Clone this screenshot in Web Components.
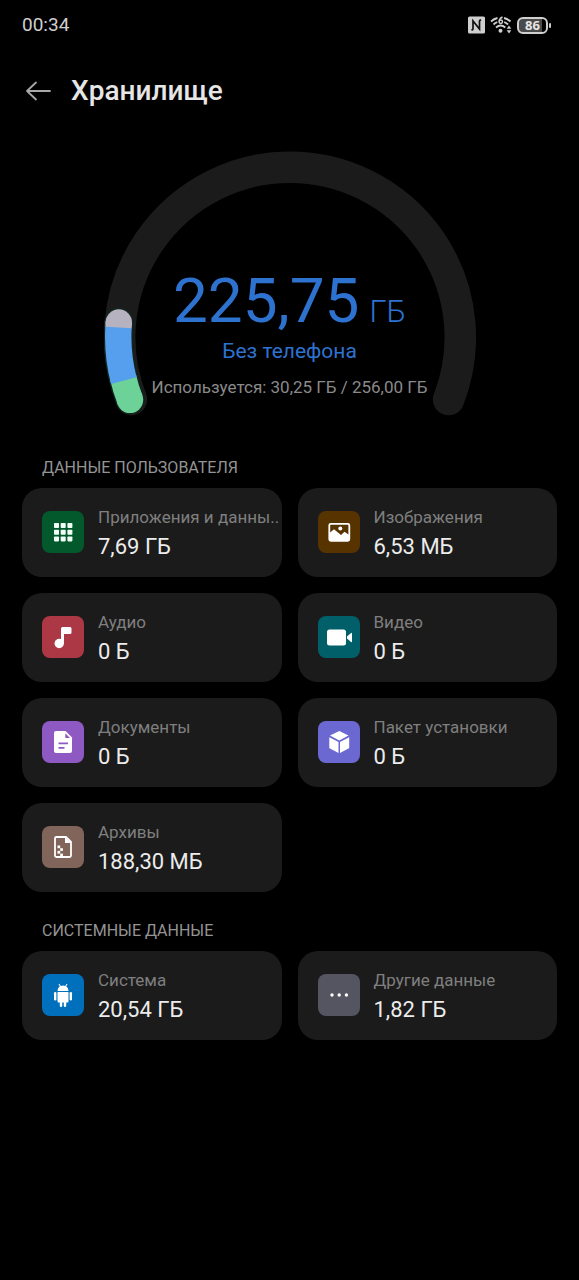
<!DOCTYPE html>
<html lang="ru">
<head>
<meta charset="utf-8">
<meta name="viewport" content="width=device-width, initial-scale=1">
<title>Хранилище</title>
<style>
  html { background: #000; }
  body { margin: 0; min-height: 100vh; background: #000; color: #e6e6e6; font-family: Roboto, "Noto Sans", sans-serif; }
</style>
</head>
<body>
<storage-screen></storage-screen>

<template id="t-screen">
  <style>
    :host { display: block; }
    main { padding: 0 22px 40px; }
  </style>
  <status-bar time="00:34" battery="86"></status-bar>
  <page-header>Хранилище</page-header>
  <main>
    <storage-gauge>
      <span slot="amount">225,75</span>
      <span slot="unit">ГБ</span>
      <span slot="caption">Без телефона</span>
      <span slot="usage">Используется: 30,25 ГБ / 256,00 ГБ</span>
    </storage-gauge>
    <storage-section>
      <span slot="title">ДАННЫЕ ПОЛЬЗОВАТЕЛЯ</span>
      <storage-card icon="apps" color="#03592c"><span slot="label">Приложения и данны..</span>7,69 ГБ</storage-card>
      <storage-card icon="image" color="#573300"><span slot="label">Изображения</span>6,53 МБ</storage-card>
      <storage-card icon="audio" color="#ac3845"><span slot="label">Аудио</span>0 Б</storage-card>
      <storage-card icon="video" color="#005f68"><span slot="label">Видео</span>0 Б</storage-card>
      <storage-card icon="doc" color="#8f59c3"><span slot="label">Документы</span>0 Б</storage-card>
      <storage-card icon="box" color="#6b68d2"><span slot="label">Пакет установки</span>0 Б</storage-card>
      <storage-card icon="zip" color="#81655b"><span slot="label">Архивы</span>188,30 МБ</storage-card>
    </storage-section>
    <storage-section>
      <span slot="title">СИСТЕМНЫЕ ДАННЫЕ</span>
      <storage-card icon="android" color="#0070bd"><span slot="label">Система</span>20,54 ГБ</storage-card>
      <storage-card icon="more" color="#555562"><span slot="label">Другие данные</span>1,82 ГБ</storage-card>
    </storage-section>
  </main>
</template>

<template id="t-status">
  <style>
    :host { display: flex; align-items: center; justify-content: space-between; height: 50px; padding: 0 28px 0 22px; font-size: 19px; line-height: 24px; color: #cfcfcf; }
    .icons { display: flex; align-items: center; gap: 5px; }
    svg { display: block; }
    .battery { display: flex; align-items: center; }
    .cell { box-sizing: border-box; width: 31px; height: 17px; border: 2px solid #cfcfcf; border-radius: 6px; background: linear-gradient(90deg, #4a4a4a 84%, #000 84%); color: #e6e6e6; font: 700 13px/13px "Open Sans", sans-serif; text-align: center; }
    .tip { width: 2px; height: 5px; margin-left: 1px; background: #cfcfcf; border-radius: 1px; }
  </style>
  <span class="time"></span>
  <div class="icons">
    <svg width="17" height="18" viewBox="0 0 17 18" aria-label="NFC"><rect y="0.5" width="17" height="17" rx="1.500" fill="#cfcfcf"/><path d="M5 13.500V5l6.500 8V4.500M3.500 14.300l1.700-1M13 3.700l-1.700 1" fill="none" stroke="#111" stroke-width="1.700"/></svg>
    <svg width="22" height="18" viewBox="0 0 22 18" aria-label="Wi-Fi 6" fill="none" stroke="#cfcfcf" stroke-width="1.800"><path d="M1 5.500Q4 2.700 7.500 2M14 2q3.500.7 6.500 3.500M3.500 8.500Q5.300 6.800 7.300 6.200M14.200 6.200q2 .6 3.800 2.300M6 11.500q4.700-4 9.300 0"/><path d="M12.500 1Q9.500 2.300 9 5.500" stroke-width="1.500"/><circle cx="10.800" cy="5.800" r="1.700" stroke-width="1.500"/><circle cx="10.500" cy="14.700" r="2" fill="#cfcfcf" stroke="none"/><path d="M19 9.500l2.300 3.300h-4.600zM19 17.500l2.300-3.300h-4.600z" fill="#cfcfcf" stroke="none"/></svg>
    <div class="battery"><div class="cell"></div><div class="tip"></div></div>
  </div>
</template>

<template id="t-header">
  <style>
    :host { display: flex; align-items: center; gap: 18px; height: 82px; padding: 0 25px; }
    button { display: flex; padding: 0; border: 0; background: none; cursor: pointer; }
    h1 { margin: 0; font-size: 28px; line-height: 36px; font-weight: 500; color: #e6e6e6; }
  </style>
  <button type="button" aria-label="Назад">
    <svg width="28" height="28" viewBox="0 0 28 28" fill="none" stroke="#a8a8a8" stroke-width="1.800" stroke-linecap="round" stroke-linejoin="round"><path d="M25 14H2M11 5.500L2 14l9 8.500"/></svg>
  </button>
  <h1><slot></slot></h1>
</template>

<template id="t-gauge">
  <style>
    :host { display: grid; justify-items: center; padding-top: 19px; }
    svg, .text { grid-area: 1 / 1; }
    svg { display: block; width: 372px; max-width: 100%; }
    .text { align-self: end; display: flex; flex-direction: column; align-items: center; gap: 10px; padding-bottom: 18px; color: #2e72d0; white-space: nowrap; }
    .value { display: flex; align-items: baseline; gap: 10px; }
    .amount { font-size: 62px; line-height: 72px; }
    .unit { font-size: 31px; line-height: 40px; font-weight: 300; }
    .caption { font-size: 21px; line-height: 28px; }
    .usage { font-size: 17px; line-height: 24px; color: #8a8a8a; }
  </style>
  <svg viewBox="104 151 372 266" aria-hidden="true" fill="none">
    <path d="M131.400 399.500A170.300 170.300 0 1 1 448.600 399.500" stroke="#1b1b1b" stroke-width="31.500" stroke-linecap="round"/>
    <g transform="translate(290.500 337)">
      <path d="M-160.500 62.800A172.300 172.300 0 0 1-171.700-15" stroke="#12241f" stroke-width="29" stroke-linecap="round"/>
      <circle cx="-171.700" cy="-14.500" r="13.200" fill="#b6b2c0"/>
      <path d="M-171.700-15L-172-9" stroke="#b6b2c0" stroke-width="26.400"/>
      <circle cx="-160.500" cy="62.800" r="13.200" fill="#6dd298"/>
      <path d="M-160.500 62.800A172.300 172.300 0 0 1-167.500 40" stroke="#6dd298" stroke-width="26.400"/>
      <path d="M-166.700 43.700A172.300 172.300 0 0 1-172-9.400" stroke="#559fee" stroke-width="26.400"/>
    </g>
  </svg>
  <div class="text">
    <div>
      <div class="value"><span class="amount"><slot name="amount"></slot></span><span class="unit"><slot name="unit"></slot></span></div>
      <div class="caption" style="text-align:center"><slot name="caption"></slot></div>
    </div>
    <div class="usage"><slot name="usage"></slot></div>
  </div>
</template>

<template id="t-section">
  <style>
    :host { display: block; padding-top: 39px; }
    :host(:not(:first-of-type)) { padding-top: 27px; }
    h2 { margin: 0 0 9px; padding: 1px 0 0 20px; font-size: 16px; line-height: 22px; font-weight: 400; color: #949494; }
    .grid { display: grid; grid-template-columns: repeat(2, minmax(0, 1fr)); gap: 16px; }
  </style>
  <h2><slot name="title"></slot></h2>
  <div class="grid"><slot></slot></div>
</template>

<template id="t-card">
  <style>
    :host { display: block; }
    button { display: flex; align-items: center; gap: 14px; width: 100%; padding: 15px 0 16px 20px; border: 0; border-radius: 20px; background: #1b1b1b; font: inherit; text-align: left; overflow: hidden; cursor: pointer; }
    .tile { flex: none; width: 42px; height: 42px; border-radius: 8px; background: var(--tile); }
    .tile svg { display: block; }
    .text { display: flex; flex-direction: column; min-width: 0; white-space: nowrap; }
    .label { font-size: 17px; line-height: 29px; color: #7f7f7f; }
    .value { font-size: 22px; line-height: 29px; color: #ececec; }
  </style>
  <button type="button">
    <span class="tile"></span>
    <span class="text"><span class="label"><slot name="label"></slot></span><span class="value"><slot></slot></span></span>
  </button>
</template>

<script>
  const ICONS = {
    apps: '<g fill="#f2fff6"><rect x="12" y="12" width="5" height="5" rx=".8"/><rect x="18.700" y="12" width="5" height="5" rx=".8"/><rect x="25.400" y="12" width="5" height="5" rx=".8"/><rect x="12" y="18.700" width="5" height="5" rx=".8"/><rect x="18.700" y="18.700" width="5" height="5" rx=".8"/><rect x="25.400" y="18.700" width="5" height="5" rx=".8"/><rect x="12" y="25.400" width="5" height="5" rx=".8"/><rect x="18.700" y="25.400" width="5" height="5" rx=".8"/><rect x="25.400" y="25.400" width="5" height="5" rx=".8"/></g>',
    image: '<rect x="11.300" y="12.800" width="20" height="17" rx="1.500" fill="none" stroke="#fff" stroke-width="1.800"/><path d="M11.500 22l4.500-3.700 7 5.700 3.500-3.200 4.700 3.200V29.500h-19.700z" fill="#fff"/><circle cx="22.300" cy="17.500" r="2" fill="#fff"/>',
    audio: '<g fill="#fff"><circle cx="17.200" cy="27.500" r="4.700"/><path d="M19 27.500V12.500q0-1.500 1.500-1.500h7.500q1.500 0 1.500 1.500v4q0 1.500-1.500 1.500h-6v9.500z"/></g>',
    video: '<g fill="#fff"><rect x="9" y="13.500" width="19" height="16" rx="2.500"/><path d="M29 20.500l4-3.500q1-.7 1 .5v8q0 1.200-1 .5l-4-3.500z"/></g>',
    doc: '<path d="M14 10h9.500l6.500 6.500V30q0 2-2 2H14q-2 0-2-2V12q0-2 2-2z" fill="#fff"/><path d="M23.300 12.300v4.700H28z" fill="#8f59c3"/><path d="M16.500 22.300h9.500M16.500 26.800h6" stroke="#8f59c3" stroke-width="1.700"/>',
    box: '<g fill="#fff"><path d="M21.300 10l9.200 4.600-9.200 5-9.300-5z"/><path d="M11.300 16.300l9.200 4.800v11L12 27.600q-.7-.3-.7-1.200z"/><path d="M31.200 16.300l-9.200 4.800v11l8.500-4.500q.7-.3.700-1.200z"/></g>',
    zip: '<path d="M14.500 11H24l5 5v13.500q0 1.500-1.500 1.500h-13q-1.500 0-1.500-1.500v-17q0-1.500 1.500-1.500z" fill="none" stroke="#fff" stroke-width="1.800" stroke-linejoin="round"/><path d="M23 11l6 6h-6z" fill="#fff"/><g fill="#fff"><rect x="15.500" y="19.500" width="2.700" height="2.700"/><rect x="18.200" y="22.200" width="2.700" height="2.700"/><rect x="15.500" y="24.900" width="2.700" height="2.700"/><rect x="18.200" y="27.600" width="2.700" height="2.700"/></g>',
    android: '<g fill="#fff"><path d="M15.500 17q0-3.200 2.300-4.700l-1.300-2 .8-.5 1.500 2.100q2.200-.7 4.400 0l1.500-2.100.8.500-1.300 2q2.300 1.500 2.300 4.700z"/><path d="M15.500 18h11v9.500q0 1-1 1h-1.300V32q0 1-1.200 1t-1.200-1v-3.500h-1.600V32q0 1-1.200 1t-1.200-1v-3.500h-1.300q-1 0-1-1z"/><rect x="12" y="18" width="2.400" height="8.500" rx="1.200"/><rect x="27.600" y="18" width="2.400" height="8.500" rx="1.200"/></g>',
    more: '<g fill="#fff"><circle cx="14" cy="21" r="1.700"/><circle cx="21.200" cy="21" r="1.700"/><circle cx="28.400" cy="21" r="1.700"/></g>'
  };

  class TemplateElement extends HTMLElement {
    constructor() {
      super();
      this.attachShadow({ mode: 'open' })
        .append(document.getElementById(this.constructor.template).content.cloneNode(true));
    }
  }
  class StorageGauge extends TemplateElement { static template = 't-gauge'; }
  class StorageSection extends TemplateElement { static template = 't-section'; }
  class PageHeader extends TemplateElement { static template = 't-header'; }
  class StatusBar extends TemplateElement {
    static template = 't-status';
    connectedCallback() {
      this.shadowRoot.querySelector('.time').textContent = this.getAttribute('time');
      this.shadowRoot.querySelector('.cell').textContent = this.getAttribute('battery');
    }
  }
  class StorageCard extends TemplateElement {
    static template = 't-card';
    connectedCallback() {
      const tile = this.shadowRoot.querySelector('.tile');
      tile.style.setProperty('--tile', this.getAttribute('color'));
      tile.innerHTML = `<svg width="42" height="42" viewBox="0 0 42 42" aria-hidden="true">${ICONS[this.getAttribute('icon')]}</svg>`;
    }
  }
  class StorageScreen extends TemplateElement { static template = 't-screen'; }

  customElements.define('status-bar', StatusBar);
  customElements.define('page-header', PageHeader);
  customElements.define('storage-gauge', StorageGauge);
  customElements.define('storage-card', StorageCard);
  customElements.define('storage-section', StorageSection);
  customElements.define('storage-screen', StorageScreen);
</script>
</body>
</html>
